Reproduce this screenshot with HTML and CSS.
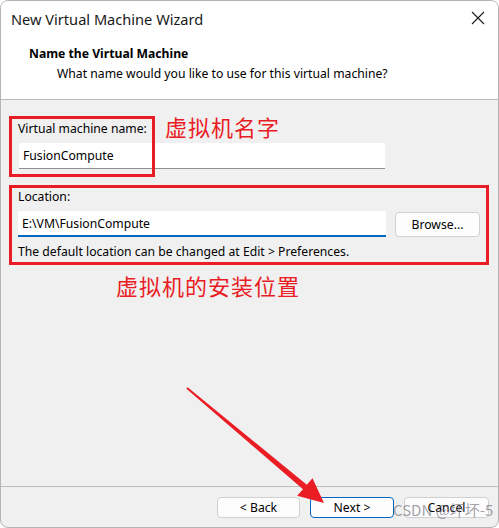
FILE: index.html
```html
<!DOCTYPE html>
<html>
<head>
<meta charset="utf-8">
<link rel="stylesheet" href="styles.css">
</head>
<body>
<div class="window">
  <div class="top">
    <div class="titlebar">
      <span class="title">New Virtual Machine Wizard</span>
      <svg class="close" width="14" height="14" viewBox="0 0 14 14"><path d="M1 1 L13 13 M13 1 L1 13" stroke="#1a1a1a" stroke-width="1.1" fill="none"/></svg>
    </div>
    <div class="header">
      <div class="h-title">Name the Virtual Machine</div>
      <div class="h-sub">What name would you like to use for this virtual machine?</div>
    </div>
  </div>
  <div class="content">
    <div class="label">Virtual machine name:</div>
    <div class="input name-input">FusionCompute</div>
    <div class="label loc-label">Location:</div>
    <div class="loc-row">
      <div class="input loc-input">E:\VM\FusionCompute</div>
      <div class="btn browse">Browse...</div>
    </div>
    <div class="help">The default location can be changed at Edit &gt; Preferences.</div>
  </div>
  <div class="footer">
    <div class="btn back">&lt; Back</div>
    <div class="btn primary">Next &gt;</div>
    <div class="btn cancel">Cancel</div>
  </div>

  <div class="mark box1"></div>
  <div class="mark box2"></div>
  <div class="note note1">虚拟机名字</div>
  <div class="note note2">虚拟机的安装位置</div>
  <svg class="arrow" width="499" height="528" viewBox="0 0 499 528">
    <polygon fill="#ea1c24" points="187.6,387.2 306.8,484.7 312.5,478.2 324,503 297.2,495.8 303,489.3 186.4,388.8"/>
  </svg>
  <div class="watermark">CSDN @坏坏-5</div>
</div>
</body>
</html>
```
FILE: styles.css
```css
html, body {
  margin: 0;
  padding: 0;
  background: #ffffff;
}
.window {
  position: relative;
  width: 499px;
  height: 528px;
  box-sizing: border-box;
  border: 1px solid #b4b4b4;
  border-radius: 8px;
  overflow: hidden;
  display: flex;
  flex-direction: column;
  font-family: "Noto Sans", "Liberation Sans", sans-serif;
  font-size: 12.2px;
  color: #000;
  background: #f0f0f0;
}
.top {
  background: #ffffff;
  border-bottom: 1px solid #b9b9b9;
  height: 99px;
  box-sizing: border-box;
}
.titlebar {
  height: 36px;
  display: flex;
  align-items: center;
  justify-content: space-between;
  padding: 0 13px 0 10px;
}
.title {
  font-size: 14.6px;
  color: #1a1a1a;
}
.close {
  margin-top: -2px;
}
.header {
  padding: 9px 0 0 28px;
}
.h-title {
  font-weight: bold;
  line-height: 16px;
}
.h-sub {
  line-height: 16px;
  margin-top: 4px;
  padding-left: 28px;
}
.content {
  flex: 1;
  padding: 21px 0 0 17px;
}
.label {
  line-height: 16px;
}
.input {
  background: #ffffff;
  height: 26px;
  box-sizing: border-box;
  border-bottom: 1px solid #8f8f8f;
  padding-left: 4px;
  line-height: 25px;
}
.name-input {
  width: 366px;
  margin: 6px 0 0 1px;
}
.loc-label {
  margin-top: 20px;
}
.loc-row {
  display: flex;
  gap: 9px;
  margin-top: 6px;
}
.loc-input {
  width: 368px;
  border-bottom: 2px solid #0067c0;
}
.btn {
  height: 25px;
  box-sizing: border-box;
  border: 1px solid #d0d0d0;
  border-radius: 4px;
  background: #fdfdfd;
  display: flex;
  align-items: center;
  justify-content: center;
}
.browse {
  width: 85px;
  margin-top: 1px;
}
.help {
  line-height: 16px;
  margin-top: 7px;
}
.footer {
  height: 41px;
  box-sizing: border-box;
  border-top: 1px solid #bdbdbd;
  display: flex;
  justify-content: flex-end;
  gap: 10px;
  padding: 10px 9px 0 0;
}
.footer .btn {
  width: 84px;
  height: 21px;
}
.footer .btn.back {
  width: 83px;
}
.footer .btn.cancel {
  width: 85px;
}
.footer .btn.primary {
  border-color: #0067c0;
}
.mark {
  position: absolute;
  border: 3px solid #ea1c24;
  box-sizing: border-box;
}
.box1 {
  left: 8px;
  top: 115px;
  width: 146px;
  height: 61px;
}
.box2 {
  left: 8px;
  top: 184px;
  width: 480px;
  height: 80px;
}
.note {
  position: absolute;
  color: #ea1c24;
  font-family: "Noto Sans CJK SC", sans-serif;
  font-size: 22px;
  line-height: 26px;
  letter-spacing: 1px;
}
.note1 {
  left: 164px;
  top: 112px;
}
.note2 {
  left: 115px;
  top: 271px;
}
.arrow {
  position: absolute;
  left: -1px;
  top: -1px;
  pointer-events: none;
}
.watermark {
  position: absolute;
  left: 392px;
  top: 500px;
  font-family: "Noto Sans CJK SC", sans-serif;
  font-size: 15px;
  line-height: 18px;
  color: rgba(110, 110, 120, 0.65);
}
```
